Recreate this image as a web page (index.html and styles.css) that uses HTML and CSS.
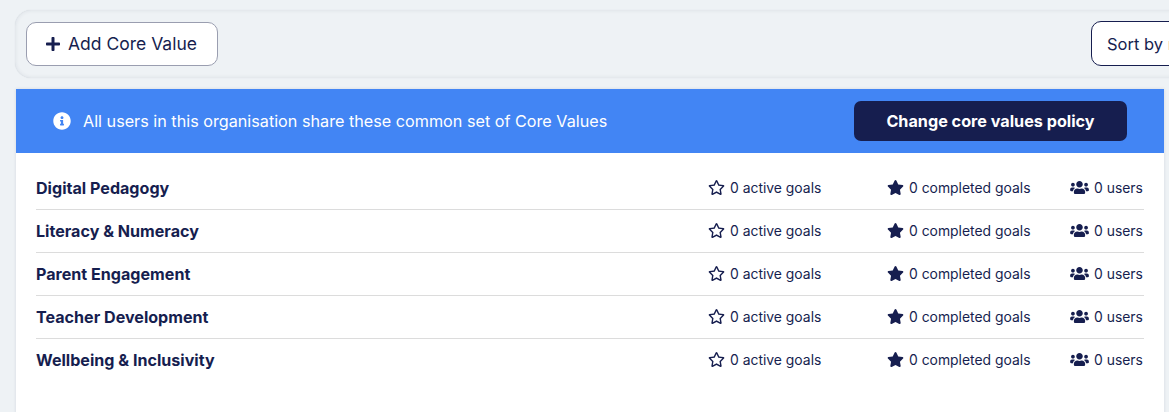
FILE: index.html
```html
<!DOCTYPE html>
<html lang="en">
<head>
<meta charset="utf-8">
<title>Core Values</title>
<link rel="stylesheet" href="styles.css">
</head>
<body>
<svg class="defs" width="0" height="0" aria-hidden="true">
  <symbol id="star-o" viewBox="0 0 576 512"><path d="M528.1 171.5L382 150.2 316.7 17.8c-11.7-23.6-45.6-23.9-57.4 0L194 150.2 47.9 171.5c-26.2 3.8-36.7 36.1-17.7 54.6l105.7 103-25 145.5c-4.5 26.3 23.2 46 46.4 33.7L288 439.6l130.7 68.7c23.2 12.2 50.9-7.4 46.4-33.7l-25-145.5 105.7-103c19-18.5 8.5-50.8-17.7-54.6zM388.6 312.3l23.7 138.4L288 385.4l-124.3 65.3 23.7-138.4-100.6-98 139-20.2 62.2-126 62.2 126 139 20.2-100.6 98z"/></symbol>
  <symbol id="star" viewBox="0 0 576 512"><path d="M259.3 17.8L194 150.2 47.9 171.5c-26.2 3.8-36.7 36.1-17.7 54.6l105.7 103-25 145.5c-4.5 26.3 23.2 46 46.4 33.7L288 439.6l130.7 68.7c23.2 12.2 50.9-7.4 46.4-33.7l-25-145.5 105.7-103c19-18.5 8.5-50.8-17.7-54.6L382 150.2 316.7 17.8c-11.7-23.6-45.6-23.9-57.4 0z"/></symbol>
  <symbol id="users" viewBox="0 0 640 512"><path d="M96 224c35.3 0 64-28.7 64-64s-28.7-64-64-64-64 28.7-64 64 28.7 64 64 64zm448 0c35.3 0 64-28.7 64-64s-28.7-64-64-64-64 28.7-64 64 28.7 64 64 64zm32 32h-64c-17.6 0-33.5 7.1-45.1 18.6 40.3 22.1 68.9 62 75.1 109.4h66c17.7 0 32-14.3 32-32v-32c0-35.3-28.7-64-64-64zm-256 0c61.9 0 112-50.1 112-112S381.9 32 320 32 208 82.1 208 144s50.1 112 112 112zm76.8 32h-8.3c-20.8 10-43.9 16-68.5 16s-47.6-6-68.5-16h-8.3C179.6 288 128 339.6 128 403.2V432c0 26.5 21.5 48 48 48h288c26.5 0 48-21.5 48-48v-28.8c0-63.6-51.6-115.2-115.2-115.2zm-223.7-13.4C161.5 263.1 145.6 256 128 256H64c-35.3 0-64 28.7-64 64v32c0 17.7 14.3 32 32 32h65.9c6.3-47.4 34.9-87.3 75.2-109.4z"/></symbol>
</svg>
<div class="toolbar">
  <button class="btn btn-add">
    <svg class="plus" viewBox="0 0 448 512"><path d="M416 208H272V64c0-17.67-14.33-32-32-32h-32c-17.67 0-32 14.33-32 32v144H32c-17.67 0-32 14.33-32 32v32c0 17.67 14.33 32 32 32h144v144c0 17.67 14.33 32 32 32h32c17.67 0 32-14.33 32-32V304h144c17.67 0 32-14.33 32-32v-32c0-17.67-14.33-32-32-32z"/></svg>
    Add Core Value
  </button>
  <button class="btn btn-sort">Sort by name</button>
</div>
<main class="card">
  <div class="banner">
    <svg class="info" viewBox="0 0 512 512"><path d="M256 8C119.043 8 8 119.083 8 256c0 136.997 111.043 248 248 248s248-111.003 248-248C504 119.083 392.957 8 256 8zm0 110c23.196 0 42 18.804 42 42s-18.804 42-42 42-42-18.804-42-42 18.804-42 42-42zm56 254c0 6.627-5.373 12-12 12h-88c-6.627 0-12-5.373-12-12v-24c0-6.627 5.373-12 12-12h12v-64h-12c-6.627 0-12-5.373-12-12v-24c0-6.627 5.373-12 12-12h64c6.627 0 12 5.373 12 12v100h12c6.627 0 12 5.373 12 12v24z"/></svg>
    <span class="banner-text">All users in this organisation share these common set of Core Values</span>
    <button class="btn-policy">Change core values policy</button>
  </div>
  <ul class="list">
    <li class="row"><span class="name">Digital Pedagogy</span><span class="stat stat-active"><svg class="ic"><use href="#star-o"/></svg>0 active goals</span><span class="stat stat-done"><svg class="ic"><use href="#star"/></svg>0 completed goals</span><span class="stat stat-users"><svg class="ic ic-users"><use href="#users"/></svg>0 users</span></li>
    <li class="row"><span class="name">Literacy &amp; Numeracy</span><span class="stat stat-active"><svg class="ic"><use href="#star-o"/></svg>0 active goals</span><span class="stat stat-done"><svg class="ic"><use href="#star"/></svg>0 completed goals</span><span class="stat stat-users"><svg class="ic ic-users"><use href="#users"/></svg>0 users</span></li>
    <li class="row"><span class="name">Parent Engagement</span><span class="stat stat-active"><svg class="ic"><use href="#star-o"/></svg>0 active goals</span><span class="stat stat-done"><svg class="ic"><use href="#star"/></svg>0 completed goals</span><span class="stat stat-users"><svg class="ic ic-users"><use href="#users"/></svg>0 users</span></li>
    <li class="row"><span class="name">Teacher Development</span><span class="stat stat-active"><svg class="ic"><use href="#star-o"/></svg>0 active goals</span><span class="stat stat-done"><svg class="ic"><use href="#star"/></svg>0 completed goals</span><span class="stat stat-users"><svg class="ic ic-users"><use href="#users"/></svg>0 users</span></li>
    <li class="row"><span class="name">Wellbeing &amp; Inclusivity</span><span class="stat stat-active"><svg class="ic"><use href="#star-o"/></svg>0 active goals</span><span class="stat stat-done"><svg class="ic"><use href="#star"/></svg>0 completed goals</span><span class="stat stat-users"><svg class="ic ic-users"><use href="#users"/></svg>0 users</span></li>
  </ul>
</main>
</body>
</html>
```
FILE: styles.css
```css
* { box-sizing: border-box; }
html, body { height: 100%; overflow: hidden; }
body {
  margin: 0;
  background: #eef2f5;
  color: #161e4f;
  font-family: Inter, Lato, sans-serif;
  font-size: 14px;
}
.defs { display: block; height: 0; }
.toolbar {
  display: flex;
  justify-content: space-between;
  align-items: center;
  width: 1261px;
  height: 68px;
  margin: 10px 0 0 15px;
  padding: 0 11px;
  background: #eef2f5;
  border-radius: 16px;
  box-shadow: inset 0 0 4px rgba(30, 40, 70, 0.1), 0 0 1px rgba(30, 40, 70, 0.15);
}
.btn {
  display: flex;
  align-items: center;
  height: 44px;
  background: #fff;
  color: #161e4f;
  font: inherit;
  font-size: 17.5px;
  border-radius: 10px;
  white-space: nowrap;
}
.btn-add {
  width: 192px;
  padding: 0 0 1px 19px;
  gap: 8px;
  border: 1px solid #9a9eb0;
}
.plus { width: 14px; height: 16px; fill: #161e4f; }
.btn-sort {
  width: 174px;
  height: 45px;
  padding: 0 15px;
  border: 1px solid #161e4f;
  margin-top: -1px;
  font-size: 16.5px;
}
.card {
  width: 1148px;
  height: 330px;
  margin: 11px 0 0 16px;
  background: #fff;
  box-shadow: 0 0 3px rgba(30, 40, 70, 0.12);
}
.banner {
  display: flex;
  align-items: center;
  height: 64px;
  padding: 0 37px;
  background: #4285f4;
  color: #fff;
}
.info { width: 18px; height: 18px; fill: #fff; margin-right: 12px; }
.banner-text { flex: 1; font-size: 16.2px; }
.btn-policy {
  width: 273px;
  height: 40px;
  background: #161e4f;
  color: #fff;
  border: 0;
  border-radius: 7px;
  font: inherit;
  font-size: 16.2px;
  font-weight: 700;
}
.list { list-style: none; margin: 14px 0 0; padding: 0 20px; }
.row {
  display: flex;
  align-items: center;
  height: 43px;
  border-bottom: 1px solid #dcdcdc;
}
.row:last-child { border-bottom-color: transparent; }
.name { flex: 1; font-size: 16.1px; font-weight: 700; }
.stat { display: flex; align-items: center; white-space: nowrap; padding-bottom: 1px; font-size: 13.9px; }
.stat-active { width: 179px; }
.stat-done { width: 183px; }
.stat-users { width: 74px; }
.ic { width: 17px; height: 15px; fill: #161e4f; margin-right: 5px; }
.ic-users { width: 19px; height: 15px; margin-right: 5px; }
```
